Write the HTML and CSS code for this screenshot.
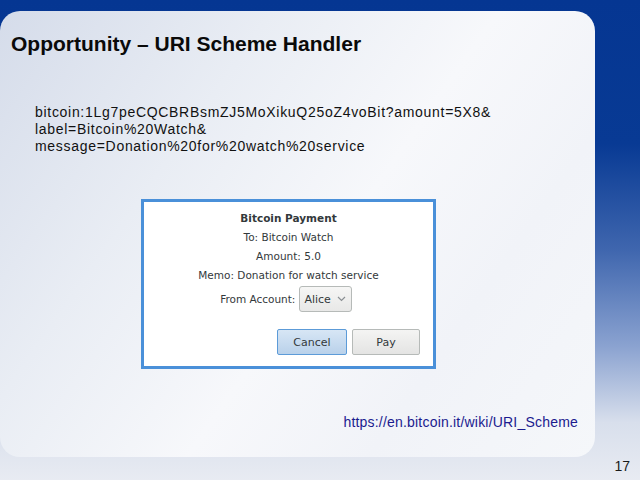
FILE: index.html
```html
<!DOCTYPE html>
<html>
<head>
<meta charset="utf-8">
<link rel="stylesheet" href="styles.css">
</head>
<body>
<div class="slide">
  <div class="card">
    <h1 class="title">Opportunity – URI Scheme Handler</h1>
    <div class="uri">
      <div>bitcoin:1Lg7peCQCBRBsmZJ5MoXikuQ25oZ4voBit?amount=5X8&amp;</div>
      <div>label=Bitcoin%20Watch&amp;</div>
      <div>message=Donation%20for%20watch%20service</div>
    </div>
    <div class="dialog">
      <div class="d-title">Bitcoin Payment</div>
      <div class="d-line">To: Bitcoin Watch</div>
      <div class="d-line">Amount: 5.0</div>
      <div class="d-line">Memo: Donation for watch service</div>
      <div class="d-row">
        <span class="d-label">From Account:</span>
        <span class="select">Alice
          <svg class="chev" width="9" height="6" viewBox="0 0 9 6"><path d="M1 1 L4.5 4.5 L8 1" fill="none" stroke="#8a8f93" stroke-width="1.2"/></svg>
        </span>
      </div>
      <div class="d-buttons">
        <span class="btn btn-focus">Cancel</span>
        <span class="btn">Pay</span>
      </div>
    </div>
    <div class="link">https://en.bitcoin.it/wiki/URI_Scheme</div>
  </div>
  <div class="pagenum">17</div>
</div>
</body>
</html>
```
FILE: styles.css
```css
html, body {
  margin: 0;
  padding: 0;
}
.slide {
  width: 640px;
  height: 480px;
  overflow: hidden;
  background: linear-gradient(to bottom, #053692 0%, #083a94 30%, #3f66ae 52%, #8aa2d0 72%, #d8dfec 88%, #e8ebf2 100%);
  font-family: "Liberation Sans", Arial, sans-serif;
  padding-top: 11px;
  box-sizing: border-box;
}
.card {
  width: 595px;
  height: 446px;
  box-sizing: border-box;
  border-radius: 20px;
  background: linear-gradient(125deg, #d5dcea 0%, #e9edf4 30%, #f7f8fb 55%, #f1f3f8 75%, #f5f7fa 100%);
  padding: 21px 17px 0 11px;
  display: flex;
  flex-direction: column;
}
.title {
  margin: 0;
  font-size: 21px;
  line-height: 24px;
  font-weight: bold;
  color: #0a0a0a;
}
.uri {
  margin: 48px 0 0 24px;
  font-size: 14px;
  line-height: 17px;
  letter-spacing: 0.7px;
  color: #111;
}
.dialog {
  margin: 44px 0 0 130px;
  width: 295px;
  height: 170px;
  box-sizing: border-box;
  border: 3px solid #4a90d9;
  background: #fff;
  padding: 7px 13px 0 0;
  font-family: "DejaVu Sans", sans-serif;
  font-size: 10.5px;
  color: #33393b;
  display: flex;
  flex-direction: column;
  align-items: center;
}
.d-title, .d-line {
  line-height: 19px;
  width: 100%;
  text-align: center;
  padding-left: 13px;
  box-sizing: border-box;
}
.d-title {
  font-weight: bold;
}
.d-row {
  margin-top: 1px;
  display: flex;
  align-items: center;
  gap: 4px;
  margin-left: 8px;
}
.select {
  display: inline-flex;
  align-items: center;
  gap: 6px;
  height: 26px;
  box-sizing: border-box;
  padding: 0 5px 0 4px;
  border: 1px solid #b6bab8;
  border-radius: 3px;
  background: linear-gradient(#f6f6f5, #e8e8e7);
  font-size: 11px;
}
.d-buttons {
  align-self: flex-end;
  margin-top: 17px;
  display: flex;
  gap: 5px;
}
.btn {
  width: 70px;
  height: 26px;
  box-sizing: border-box;
  border: 1px solid #b6bab8;
  border-radius: 2px;
  background: linear-gradient(#f4f4f3, #e4e4e3);
  display: flex;
  align-items: center;
  justify-content: center;
  font-size: 11px;
}
.btn:last-child {
  width: 68px;
}
.btn-focus {
  border-color: #5c9bd8;
  background: linear-gradient(#d7e6f5, #b9d1ea);
}
.link {
  margin-top: 45px;
  align-self: flex-end;
  font-size: 14px;
  line-height: 17px;
  letter-spacing: 0.2px;
  color: #1b1b8f;
}
.pagenum {
  text-align: right;
  padding-right: 10px;
  font-size: 14px;
  line-height: 17px;
  margin-top: 1px;
  color: #1a1a1a;
}
```
